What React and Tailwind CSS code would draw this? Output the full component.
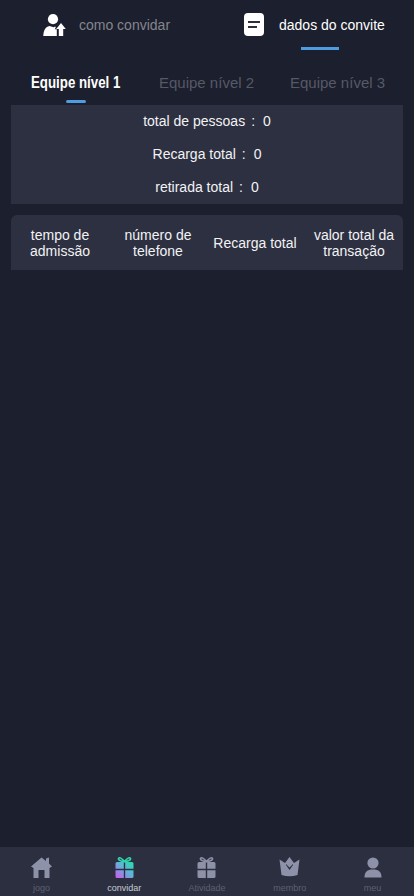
import React from "react";

const font = { fontFamily: '"Liberation Sans", Arial, sans-serif' };

function Stat({ label }) {
  return (
    <div className="h-[33px] flex items-center justify-center text-[14px] text-[#f2f3f5]">
      <span>{label}</span>
      <span className="ml-[6px]">:</span>
      <span className="ml-[8px]">0</span>
    </div>
  );
}

function NavItem({ label, active, children }) {
  return (
    <div className="flex-1 flex flex-col items-center pt-[9px]">
      <div className="h-[22px] flex items-center justify-center">{children}</div>
      <span className={`mt-[3px] text-[9px] leading-[14px] ${active ? "text-[#c9ccd6]" : "text-[#5d6172]"}`}>{label}</span>
    </div>
  );
}

function Gift({ active }) {
  const fill = active ? "url(#giftGrad)" : "#8d92a8";
  const bow = active ? "#2fd8b0" : "#8d92a8";
  return (
    <svg width="19" height="21" viewBox="0 0 19 21">
      {active && (
        <defs>
          <linearGradient id="giftGrad" x1="0" y1="1" x2="1" y2="0">
            <stop offset="0" stopColor="#d455f0" />
            <stop offset="0.55" stopColor="#5fb4d8" />
            <stop offset="1" stopColor="#22e0a8" />
          </linearGradient>
        </defs>
      )}
      <path d="M9.5 4.5 C7 1 4 0 3.5 1.5 C3 3 6 4.5 9.5 4.5 C13 4.5 16 3 15.5 1.5 C15 0 12 1 9.5 4.5 Z" stroke={bow} strokeWidth="1.6" fill="none" />
      <path fill={fill} d="M0.5 6.5 a1.5 1.5 0 0 1 1.5-1.5 H8.8 V11.8 H0.5 Z M10.2 5 H17 a1.5 1.5 0 0 1 1.5 1.5 V11.8 H10.2 Z M0.5 13.2 H8.8 V21 H2 a1.5 1.5 0 0 1-1.5-1.5 Z M10.2 13.2 H18.5 V19.5 a1.5 1.5 0 0 1-1.5 1.5 H10.2 Z" />
    </svg>
  );
}

export default function App() {
  return (
    <div style={font} className="h-[896px] w-[414px] bg-[#1c1f2d] flex flex-col overflow-hidden">
      <div className="h-[51px] flex shrink-0">
        <div className="w-[207px] flex items-start pt-[14px] pl-[43px]">
          <svg width="23" height="23" viewBox="0 0 23 23" className="shrink-0">
            <circle cx="10" cy="5.2" r="5.1" fill="#fff" />
            <path fill="#fff" d="M0.3 22 C0.6 16 2.5 12.8 6.5 12 L10.6 13.2 L12.2 12.4 L12.8 13.2 L11.8 15.2 L13.8 15.2 L13.8 22 Z" />
            <path fill="#fff" d="M18 9 L22.8 15 L20.2 15 L20.2 22 L15.8 22 L15.8 15 L13.2 15 Z" />
          </svg>
          <span className="ml-[13px] text-[14px] leading-[23px] text-[#84868e]">como convidar</span>
        </div>
        <div className="w-[207px] relative flex items-start pt-[14px] pl-[37px]">
          <svg width="20" height="23" viewBox="0 0 20 23" className="shrink-0 mt-[-1px]">
            <rect x="0" y="0" width="20" height="23" rx="4" fill="#fff" />
            <rect x="4" y="8" width="12" height="2" fill="#2c2f3f" />
            <rect x="4" y="13" width="9" height="2" fill="#2c2f3f" />
          </svg>
          <span className="ml-[15px] text-[14px] leading-[23px] text-white">dados do convite</span>
          <div className="absolute left-[94px] top-[47px] w-[38px] h-[3px] bg-[#4f9be0]" />
        </div>
      </div>

      <div className="h-[54px] shrink-0 flex relative text-[15px] leading-[20px] pt-[22px] text-[#565966]">
        <div className="w-[31px]" />
        <span className="w-[128px]">
          <span className="inline-block origin-left scale-x-[0.83] text-[16px] font-bold text-white whitespace-nowrap">Equipe nível 1</span>
        </span>
        <span className="w-[131px] whitespace-nowrap">Equipe nível 2</span>
        <span className="whitespace-nowrap">Equipe nível 3</span>
        <div className="absolute left-[66px] top-[49px] w-[20px] h-[3px] rounded-full bg-[#4f9be0]" />
      </div>

      <div className="mx-[11px] h-[99px] bg-[#2d3040] shrink-0">
        <Stat label="total de pessoas" />
        <Stat label="Recarga total" />
        <Stat label="retirada total" />
      </div>

      <div className="mx-[11px] mt-[11px] h-[55px] bg-[#2d3040] rounded-t-[6px] shrink-0 flex items-center text-[14px] leading-[16px] text-[#f2f3f5] text-center">
        <div className="w-[98px]">tempo de<br />admissão</div>
        <div className="w-[98px]">número de<br />telefone</div>
        <div className="w-[98px] pr-[2px]">Recarga total</div>
        <div className="w-[98px]">valor total da<br />transação</div>
      </div>

      <div className="flex-1" />

      <div className="h-[49px] bg-[#2c2f40] flex shrink-0">
        <NavItem label="jogo">
          <svg width="21" height="21" viewBox="0 0 21 21">
            <path fill="#8d92a8" fillRule="evenodd" d="M10.5 0.5 L15 4 L15 1.5 L18 0.5 L18 6.5 L21 9.5 L18.5 11 L18.5 21 L13.5 21 L13.5 13 L7.5 13 L7.5 21 L2.5 21 L2.5 11 L0 9.5 Z" />
          </svg>
        </NavItem>
        <NavItem label="convidar" active>
          <Gift active />
        </NavItem>
        <NavItem label="Atividade">
          <Gift />
        </NavItem>
        <NavItem label="membro">
          <svg width="21" height="20" viewBox="0 0 21 20">
            <path fill="#8d92a8" fillRule="evenodd" d="M0.5 2.5 L6 6 L10.5 0 L15 6 L20.5 2.5 L18.5 18 Q10.5 20.5 2.5 18 Z M7 8 L10.5 13 L14 8 L14 7 L10.5 10.5 L7 7 Z" />
          </svg>
        </NavItem>
        <NavItem label="meu">
          <svg width="18" height="21" viewBox="0 0 18 21">
            <circle cx="9" cy="6" r="5.6" fill="#8d92a8" />
            <path fill="#8d92a8" d="M0.5 20.5 C0.5 15 3 12.5 9 12.5 C15 12.5 17.5 15 17.5 20.5 Z" />
          </svg>
        </NavItem>
      </div>
    </div>
  );
}
